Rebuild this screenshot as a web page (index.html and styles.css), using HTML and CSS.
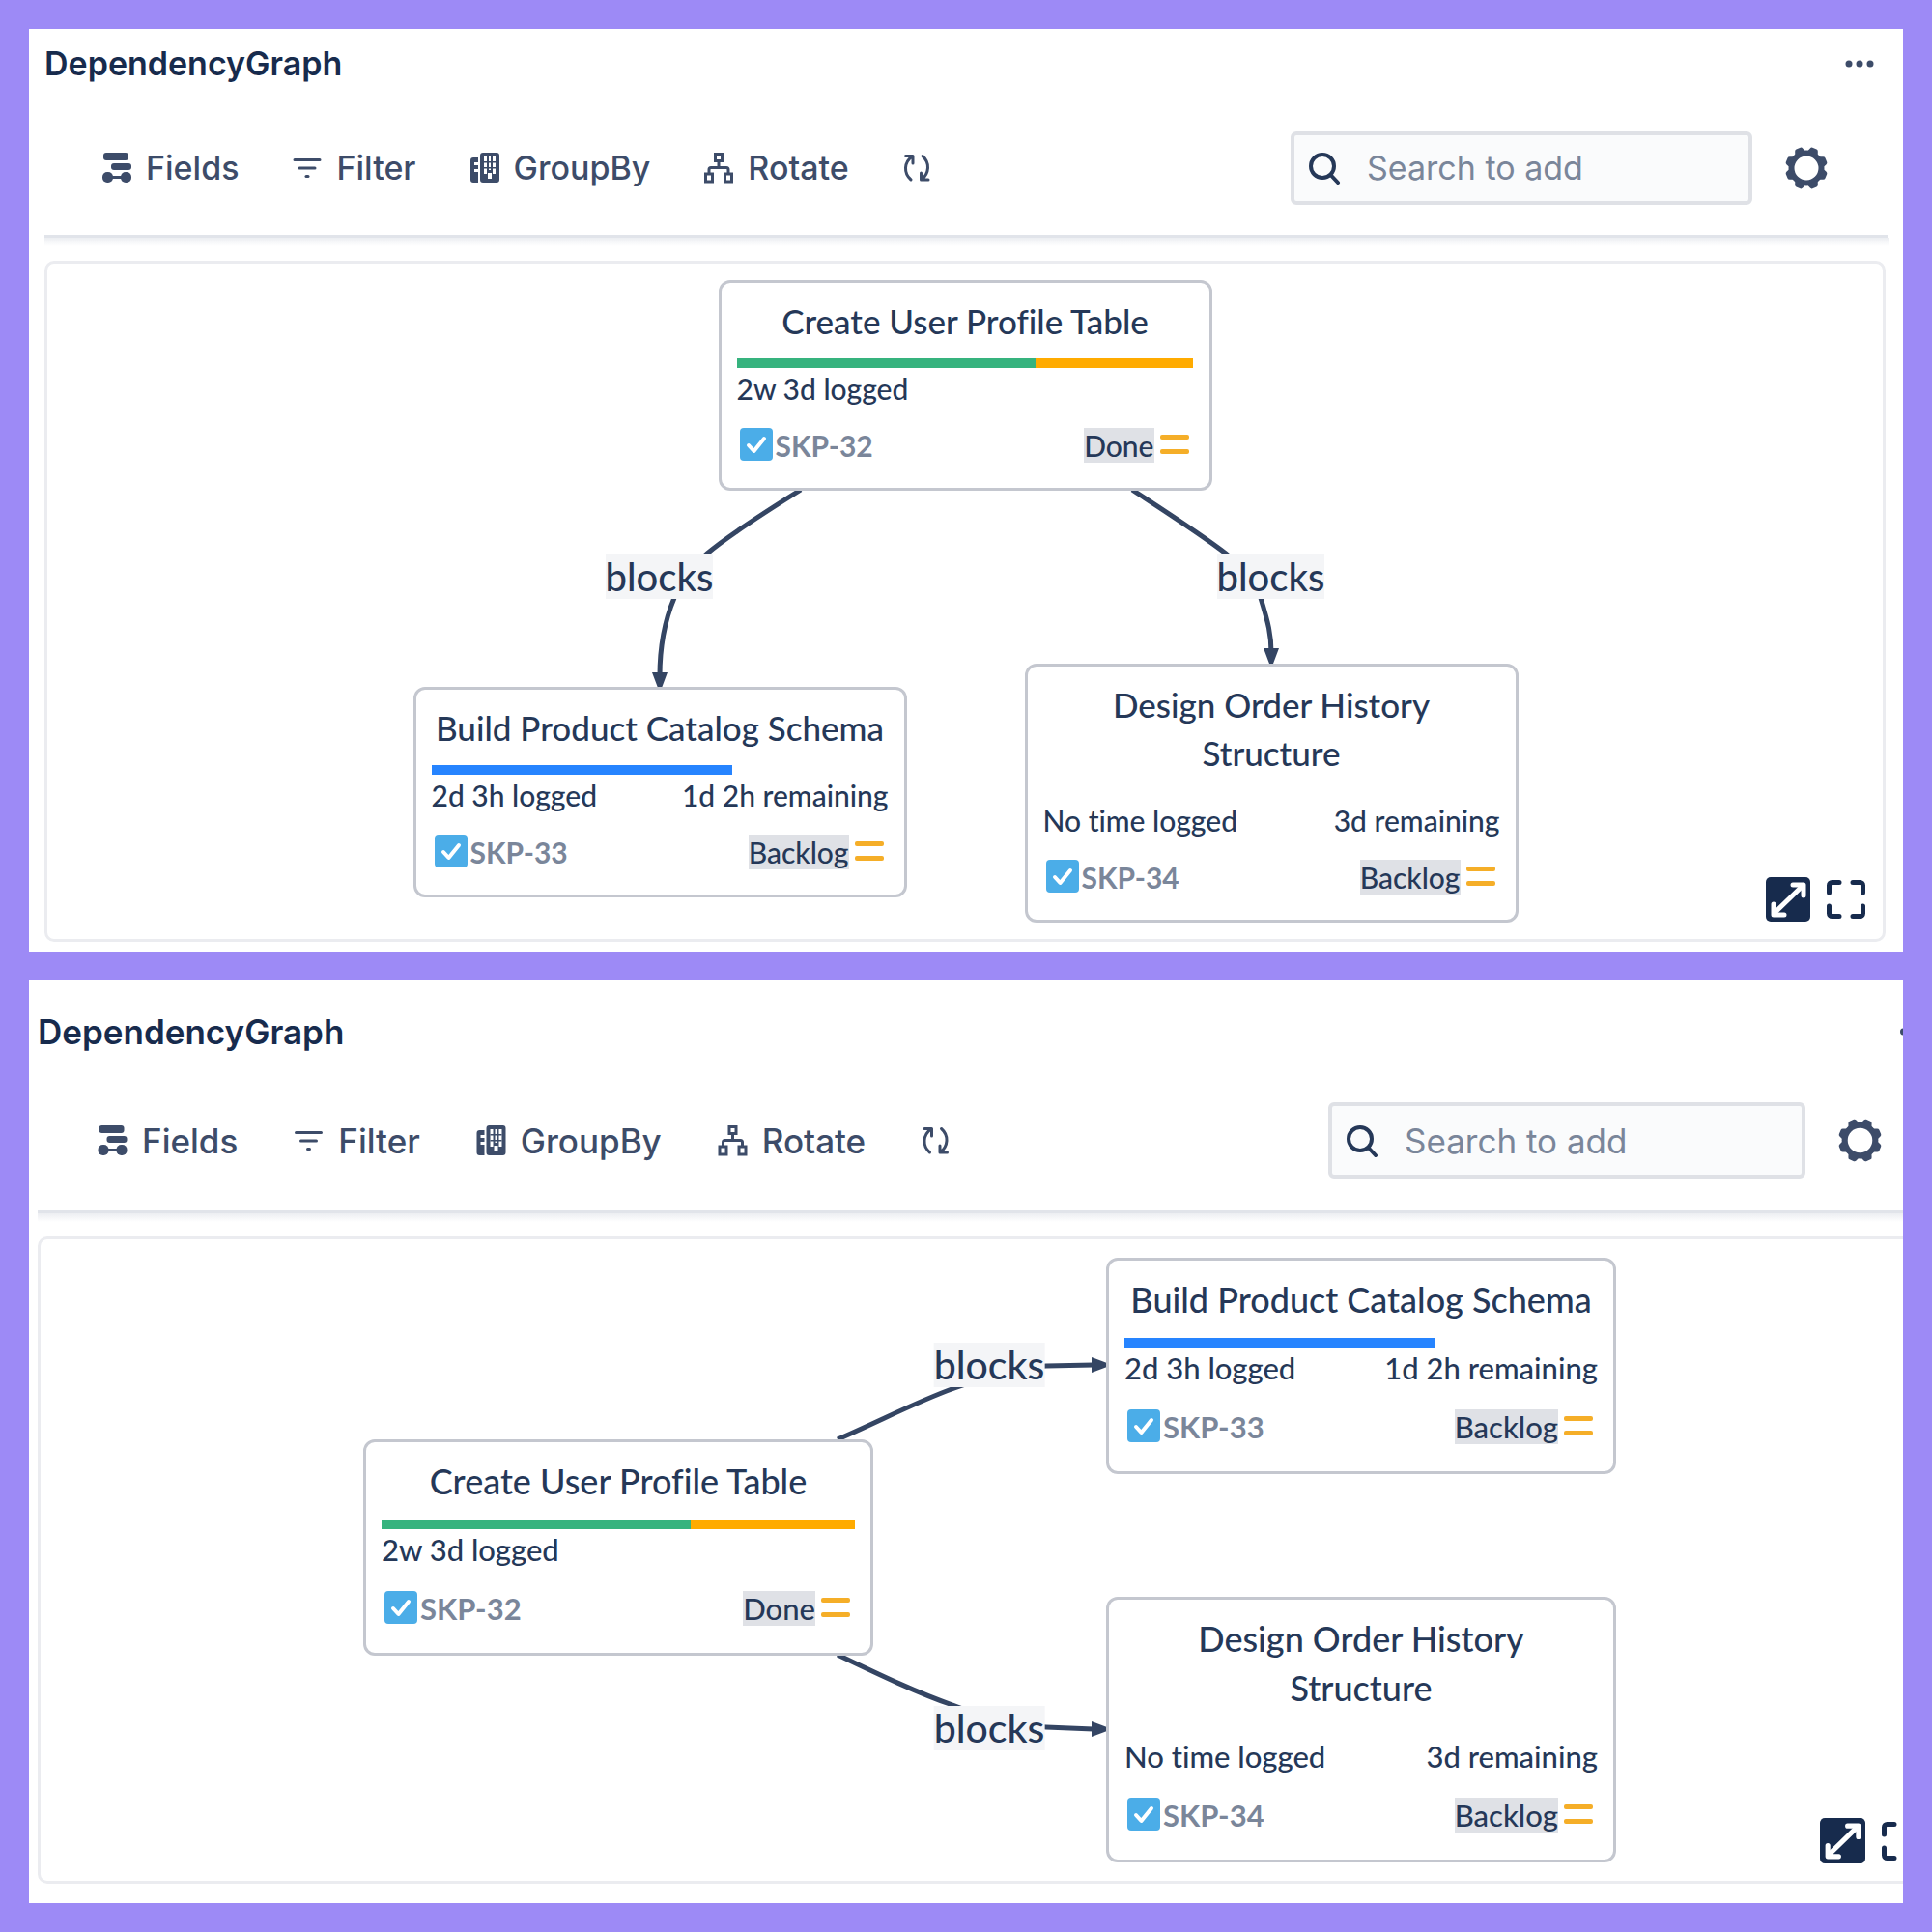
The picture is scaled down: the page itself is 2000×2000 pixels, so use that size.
FILE: index.html
```html
<!DOCTYPE html>
<html lang="en">
<head>
<meta charset="utf-8">
<meta name="viewport" content="width=device-width, initial-scale=1">
<title>DependencyGraph</title>
<link rel="stylesheet" href="styles.css">
</head>
<body>
<svg class="sprite" aria-hidden="true">
  <symbol id="i-fields" viewBox="0 0 30 32">
    <rect x="1" y="0" width="26" height="8" rx="3"/>
    <rect x="9" y="11" width="21" height="7" rx="3"/>
    <rect x="5" y="24" width="20" height="3"/>
    <rect x="0" y="20" width="11" height="11" rx="5"/>
    <rect x="19" y="20" width="11" height="11" rx="5"/>
  </symbol>
  <symbol id="i-filter" viewBox="0 0 30 32">
    <g fill="none" stroke="currentColor" stroke-width="3" stroke-linecap="round"><path d="M2 7.500h26M7 16h16"/><path d="M14 24.500h2"/></g>
  </symbol>
  <symbol id="i-group" viewBox="0 0 30 32">
    <path fill-rule="evenodd" d="M13 0h14a3 3 0 0 1 3 3v25a3 3 0 0 1-3 3H13a3 3 0 0 1-3-3V3a3 3 0 0 1 3-3zM14 4v18h3V4zm5 0v14h2V4zm4 0v18h3V4zM18 21v6h4v-6z"/>
    <path d="M14 9h12v1.500H14zM14 15h12v1.500H14z"/>
    <path fill-rule="evenodd" d="M8 5v26H3a3 3 0 0 1-3-3V8a3 3 0 0 1 3-3zM4 10v3h4v-3zm0 7v3h4v-3z"/>
  </symbol>
  <symbol id="i-rotate" viewBox="0 0 30 32">
    <g fill="none" stroke="currentColor" stroke-width="3"><rect x="11.500" y="1.500" width="7" height="7"/><rect x="1.500" y="22" width="7" height="8"/><rect x="21.500" y="22" width="7" height="8"/><path d="M15 8.500v7M5 22v-4.500a2 2 0 0 1 2-2h16a2 2 0 0 1 2 2V22"/></g>
  </symbol>
  <symbol id="i-refresh" viewBox="0 0 30 32">
    <g fill="none" stroke="currentColor" stroke-width="3" stroke-linecap="round" stroke-linejoin="round"><path d="M8 28C0 21 1 10 9 4M2.500 3.500H10V11"/><path d="M20 3.500c8 7 7 18-1 24.500M26 28h-7.500v-7"/></g>
  </symbol>
  <symbol id="i-search" viewBox="0 0 34 34">
    <g fill="none" stroke="currentColor" stroke-width="4" stroke-linecap="round"><circle cx="15" cy="15" r="12"/><path d="M23.500 24l7.500 8"/></g>
  </symbol>
  <symbol id="i-gear" viewBox="0 0 46 46">
    <circle cx="23" cy="23" r="15.500" fill="none" stroke="currentColor" stroke-width="6"/>
    <g transform="rotate(22.500 23 23)"><path id="tooth" d="M17 7l1.700-4.500q.6-1.500 2-1.500h4.600q1.400 0 2 1.500L29 7z"/><use href="#tooth" transform="rotate(45 23 23)"/><use href="#tooth" transform="rotate(90 23 23)"/><use href="#tooth" transform="rotate(135 23 23)"/><use href="#tooth" transform="rotate(180 23 23)"/><use href="#tooth" transform="rotate(225 23 23)"/><use href="#tooth" transform="rotate(270 23 23)"/><use href="#tooth" transform="rotate(315 23 23)"/></g>
  </symbol>
  <symbol id="i-more" viewBox="0 0 30 8"><circle cx="4" cy="4" r="3.500"/><circle cx="15" cy="4" r="3.500"/><circle cx="26" cy="4" r="3.500"/></symbol>
  <symbol id="i-expand" viewBox="0 0 46 46">
    <rect x="0" y="0" width="46" height="46" rx="5"/>
    <g fill="none" stroke="#fff" stroke-width="5" stroke-linecap="round" stroke-linejoin="round"><path d="M9 37L38 9"/><path d="M28 8h11v11M8 28v11h11"/></g>
  </symbol>
  <symbol id="i-full" viewBox="0 0 42 42">
    <path fill="none" stroke="currentColor" stroke-width="5" stroke-linecap="round" d="M14 3.500H6.500a3 3 0 0 0-3 3V14M28 3.500h7.500a3 3 0 0 1 3 3V14M14 38.500H6.500a3 3 0 0 1-3-3V28M28 38.500h7.500a3 3 0 0 0 3-3V28"/>
  </symbol>
  <symbol id="i-task" viewBox="0 0 36 36">
    <rect x="1" y="0" width="34" height="34" rx="4" fill="#4bade8"/>
    <path d="M10 18l5.500 6L26 11" fill="none" stroke="#fff" stroke-width="4" stroke-linecap="round" stroke-linejoin="round"/>
  </symbol>
  <symbol id="i-medium" viewBox="0 0 30 26"><rect y="2" width="30" height="5" rx="2"/><rect y="17" width="30" height="5" rx="2"/></symbol>
</svg>

<main class="page">
  <section class="panel panel-vertical">
    <div class="panel-body">
      <header class="panel-header">
        <h2>DependencyGraph</h2>
        <button class="more" type="button" aria-label="More actions"><svg><use href="#i-more"/></svg></button>
      </header>
      <div class="toolbar">
        <button class="tool" type="button"><svg><use href="#i-fields"/></svg>Fields</button>
        <button class="tool" type="button"><svg><use href="#i-filter"/></svg>Filter</button>
        <button class="tool" type="button"><svg><use href="#i-group"/></svg>GroupBy</button>
        <button class="tool" type="button"><svg><use href="#i-rotate"/></svg>Rotate</button>
        <button class="tool" type="button" aria-label="Refresh"><svg><use href="#i-refresh"/></svg></button>
        <label class="search"><svg><use href="#i-search"/></svg><input type="text" placeholder="Search to add" aria-label="Search to add"></label>
        <button class="gear" type="button" aria-label="Settings"><svg><use href="#i-gear"/></svg></button>
      </div>
      <div class="canvas">
        <div class="graph">
          <svg class="edges" viewBox="0 0 1143 662" aria-hidden="true">
            <path class="edge" d="M401 217C353 247 323 267 304 283C288 297 276 313 270 329C259 355 255 381 255 410"/>
            <path d="M247 406h16l-6 16h-4z"/>
            <path class="edge" d="M744 217C793 249 818 265 841 283C861 299 873 315 877 329C885 355 888 367 888 386"/>
            <path d="M880 381h16l-6 16h-4z"/>
          </svg>
          <span class="edge-label v-left">blocks</span>
          <span class="edge-label v-right">blocks</span>
          <article class="card v-root">
            <h3>Create User Profile Table</h3>
            <div class="progress"><span class="done" style="width:65.400%"></span><span class="over" style="width:34.600%"></span></div>
            <div class="time"><span>2w 3d logged</span></div>
            <div class="meta"><svg class="task"><use href="#i-task"/></svg><b>SKP-32</b><span class="status">Done</span><svg class="priority"><use href="#i-medium"/></svg></div>
          </article>
          <article class="card v-build">
            <h3>Build Product Catalog Schema</h3>
            <div class="progress"><span class="logged" style="width:65.800%"></span></div>
            <div class="time"><span>2d 3h logged</span><span>1d 2h remaining</span></div>
            <div class="meta"><svg class="task"><use href="#i-task"/></svg><b>SKP-33</b><span class="status">Backlog</span><svg class="priority"><use href="#i-medium"/></svg></div>
          </article>
          <article class="card v-design">
            <h3>Design Order History Structure</h3>
            <div class="progress"></div>
            <div class="time"><span>No time logged</span><span>3d remaining</span></div>
            <div class="meta"><svg class="task"><use href="#i-task"/></svg><b>SKP-34</b><span class="status">Backlog</span><svg class="priority"><use href="#i-medium"/></svg></div>
          </article>
        </div>
        <div class="view-actions">
          <button class="expand" type="button" aria-label="Fit to view"><svg><use href="#i-expand"/></svg></button>
          <button class="full" type="button" aria-label="Full screen"><svg><use href="#i-full"/></svg></button>
        </div>
      </div>
    </div>
  </section>

  <section class="panel panel-horizontal">
    <div class="panel-body">
      <header class="panel-header">
        <h2>DependencyGraph</h2>
        <button class="more" type="button" aria-label="More actions"><svg><use href="#i-more"/></svg></button>
      </header>
      <div class="toolbar">
        <button class="tool" type="button"><svg><use href="#i-fields"/></svg>Fields</button>
        <button class="tool" type="button"><svg><use href="#i-filter"/></svg>Filter</button>
        <button class="tool" type="button"><svg><use href="#i-group"/></svg>GroupBy</button>
        <button class="tool" type="button"><svg><use href="#i-rotate"/></svg>Rotate</button>
        <button class="tool" type="button" aria-label="Refresh"><svg><use href="#i-refresh"/></svg></button>
        <label class="search"><svg><use href="#i-search"/></svg><input type="text" placeholder="Search to add" aria-label="Search to add"></label>
        <button class="gear" type="button" aria-label="Settings"><svg><use href="#i-gear"/></svg></button>
      </div>
      <div class="canvas">
        <div class="graph">
          <svg class="edges" viewBox="0 0 1296 625" aria-hidden="true">
            <path class="edge" d="M491 188C535 169 575 148 612 135C650 121 680 113 707 112L756 111"/>
            <path d="M754 103v16l16-6v-4z"/>
            <path class="edge" d="M491 411C535 432 575 451 610 463C650 479 680 485 707 486L756 488"/>
            <path d="M754 480v16l16-6v-4z"/>
          </svg>
          <span class="edge-label h-top">blocks</span>
          <span class="edge-label h-bottom">blocks</span>
          <article class="card h-root">
            <h3>Create User Profile Table</h3>
            <div class="progress"><span class="done" style="width:65.400%"></span><span class="over" style="width:34.600%"></span></div>
            <div class="time"><span>2w 3d logged</span></div>
            <div class="meta"><svg class="task"><use href="#i-task"/></svg><b>SKP-32</b><span class="status">Done</span><svg class="priority"><use href="#i-medium"/></svg></div>
          </article>
          <article class="card h-build">
            <h3>Build Product Catalog Schema</h3>
            <div class="progress"><span class="logged" style="width:65.800%"></span></div>
            <div class="time"><span>2d 3h logged</span><span>1d 2h remaining</span></div>
            <div class="meta"><svg class="task"><use href="#i-task"/></svg><b>SKP-33</b><span class="status">Backlog</span><svg class="priority"><use href="#i-medium"/></svg></div>
          </article>
          <article class="card h-design">
            <h3>Design Order History Structure</h3>
            <div class="progress"></div>
            <div class="time"><span>No time logged</span><span>3d remaining</span></div>
            <div class="meta"><svg class="task"><use href="#i-task"/></svg><b>SKP-34</b><span class="status">Backlog</span><svg class="priority"><use href="#i-medium"/></svg></div>
          </article>
        </div>
        <div class="view-actions">
          <button class="expand" type="button" aria-label="Fit to view"><svg><use href="#i-expand"/></svg></button>
          <button class="full" type="button" aria-label="Full screen"><svg><use href="#i-full"/></svg></button>
        </div>
      </div>
    </div>
  </section>
</main>
</body>
</html>
```
FILE: styles.css
```css
* { box-sizing: border-box; }

body {
  margin: 0;
  background: #9d8af6;
  color: #253858;
  font-family: Inter, "Liberation Sans", sans-serif;
}

h2, h3 { margin: 0; }

svg { display: block; width: 100%; height: 100%; fill: currentColor; }

.sprite { position: absolute; width: 0; height: 0; }

button {
  padding: 0;
  border: 0;
  background: none;
  color: #3d4c69;
  font: inherit;
  cursor: pointer;
}

.page {
  display: flex;
  flex-direction: column;
  gap: 30px;
  padding: 30px;
}

/* Each panel sets its own zoom step through these sizes */
.panel {
  background: #fff;
  overflow: hidden;
}

.panel-vertical {
  --ui: 34px;
  --title: 35px;
  --small: 30px;
  --label: 40px;
  --line: 50px;
  --icon: 30px;
  --gear: 46px;
  --tool-gap: 56px;
  --search-w: 478px;
  --search-h: 76px;
  --card-w: 511px;
  --card-top: 14px;
  --card-bottom: 6px;
  --time-h: 42px;
  --meta-h: 76px;
  padding: 14px 16px 10px;
}

.panel-horizontal {
  --ui: 35px;
  --title: 36px;
  --small: 31px;
  --label: 41px;
  --line: 51px;
  --icon: 31px;
  --gear: 47px;
  --tool-gap: 58px;
  --search-w: 494px;
  --search-h: 79px;
  --card-w: 528px;
  --card-top: 15px;
  --card-bottom: 7px;
  --time-h: 43px;
  --meta-h: 78px;
  padding: 31px 0 20px 9px;
}

/* the second panel is wider than its frame and runs off the right edge */
.panel-horizontal .panel-body { margin-right: -41px; }

.panel-header {
  display: flex;
  align-items: center;
  justify-content: space-between;
  height: 44px;
  padding-right: 14px;
}

.panel-header h2 {
  color: #172b4d;
  font-size: var(--ui);
  font-weight: 600;
  line-height: 44px;
}

.more { width: var(--icon); height: 8px; }

.toolbar {
  display: flex;
  align-items: center;
  gap: var(--tool-gap);
  margin-top: 48px;
  padding: 0 61px 31px 60px;
  border-bottom: 3px solid #e1e4ea;
}

.panel-horizontal .toolbar { margin-top: 51px; padding: 0 62px 33px; }

.tool {
  display: flex;
  align-items: center;
  gap: 15px;
  font-size: var(--ui);
  font-weight: 500;
  line-height: 44px;
}

.tool svg { width: var(--icon); height: 32px; }

.search {
  display: flex;
  align-items: center;
  gap: 27px;
  width: var(--search-w);
  height: var(--search-h);
  margin-left: auto;
  padding: 0 14px;
  border: 4px solid #dfe1e6;
  border-radius: 6px;
  background: #fafbfc;
  color: #253858;
}

.search svg { flex: none; width: 34px; height: 34px; }

.search input {
  flex: 1;
  min-width: 0;
  padding: 0;
  border: 0;
  outline: 0;
  background: none;
  color: #253858;
  font: 400 var(--ui)/44px Inter, "Liberation Sans", sans-serif;
}

.search input::placeholder { color: #7a869a; opacity: 1; }

.gear { width: var(--gear); height: var(--gear); margin-left: calc(33px - var(--tool-gap)); }

/* soft shade under the toolbar rule */
.toolbar + .canvas::before {
  content: "";
  position: absolute;
  left: -3px;
  right: -6px;
  top: -27px;
  height: 9px;
  background: linear-gradient(#eceef2, #fff);
}

.canvas {
  position: relative;
  display: flex;
  justify-content: center;
  margin: 24px 2px 0 0;
  padding: 17px 0 20px;
  border: 3px solid #ebecf0;
  border-radius: 10px;
}

.panel-horizontal .canvas { padding: 19px 0 20px; }

/* Diagram: nodes and labels sit on a free canvas */
.graph {
  position: relative;
  flex: none;
  font-family: Lato, "Open Sans", sans-serif;
  font-weight: 500;
  font-variant-ligatures: no-common-ligatures;
}

.panel-vertical .graph { width: 1143px; height: 662px; }
.panel-horizontal .graph { width: 1296px; height: 625px; }

.edges { position: absolute; inset: 0; color: #344563; }

.edge { fill: none; stroke: currentColor; stroke-width: 5; }

.edge-label {
  position: absolute;
  background: #f4f5f7;
  font-size: var(--label);
  line-height: 46px;
  transform: translate(-50%, -50%);
}

.v-left { left: 255px; top: 307px; }
.v-right { left: 888px; top: 307px; }
.h-top { left: 648px; top: 111px; }
.h-bottom { left: 648px; top: 487px; }

.card {
  position: absolute;
  width: var(--card-w);
  padding: var(--card-top) 16px var(--card-bottom);
  border: 3px solid #c4c7cf;
  border-radius: 12px;
  background: #fff;
}

.v-root { left: 316px; top: 0; }
.v-build { left: 0; top: 421px; }
.v-design { left: 633px; top: 397px; }
.h-root { left: 0; top: 188px; }
.h-build { left: 769px; top: 0; }
.h-design { left: 769px; top: 351px; }

.card h3 {
  font-size: var(--title);
  font-weight: 500;
  line-height: var(--line);
  text-align: center;
}

.progress { display: flex; height: 10px; margin-top: 14px; }
.done { background: #36b37e; }
.over { background: #ffab00; }
.logged { background: #2684ff; }

.time {
  display: flex;
  justify-content: space-between;
  font-size: var(--small);
  line-height: var(--time-h);
}

.meta {
  display: flex;
  align-items: center;
  height: var(--meta-h);
  padding-right: 5px;
  font-size: var(--small);
  line-height: 36px;
}

.meta b { margin-left: 2px; color: #7a869a; }

.task { flex: none; width: 36px; height: 36px; margin-left: 2px; }

.status { margin-left: auto; background: #dfe1e6; }

.priority { flex: none; width: 30px; height: 26px; margin-left: 6px; color: #f5ae28; }

.view-actions {
  position: absolute;
  right: 17px;
  bottom: 18px;
  display: flex;
  align-items: center;
  gap: 16px;
  color: #172b4d;
}

.view-actions button { color: inherit; }
.expand { width: var(--gear); height: var(--gear); }
.full { width: 42px; height: 42px; }
```
